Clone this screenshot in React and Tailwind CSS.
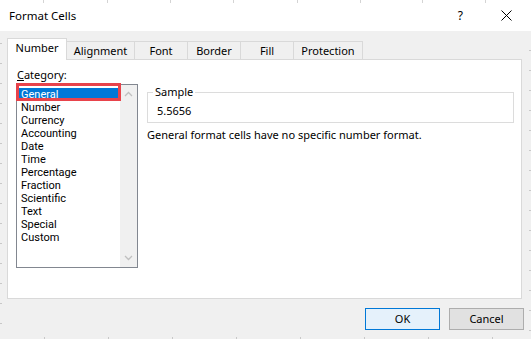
import React from "react";

const items = ["General","Number","Currency","Accounting","Date","Time","Percentage","Fraction","Scientific","Text","Special","Custom"];
const tabs = [
  { t: "Alignment", w: "w-[68px]" },
  { t: "Font", w: "w-[53px]" },
  { t: "Border", w: "w-[53px]" },
  { t: "Fill", w: "w-[53px]" },
  { t: "Protection", w: "w-[69px]" },
];
const topTicks = [43,107,170,233,297,360,422,485];
const leftTicks = [43,63,83,103,123,143,163,183,203,223,243,263,283,303,323];
const rightTicks = [50,70,90,110,130,150,170,190,210,230,250,270,290,310,330];
const bottomTicks = [44,108,172,236,300,364,428,492];

export default function App() {
  return (
    <div className="relative w-[531px] h-[339px] overflow-hidden bg-[#f0f0f0] text-[11px] text-black" style={{ fontFamily: '"Noto Sans", sans-serif' }}>
      <div className="h-[31px] bg-white flex items-center pl-[9px]">
        <span className="flex-1 leading-none text-[11.5px]">Format Cells</span>
        <span className="text-[12px] leading-none mr-[38px]">?</span>
        <svg width="11" height="11" viewBox="0 0 11 11" className="mr-[19px]">
          <path d="M0.5 0.5 L10.5 10.5 M10.5 0.5 L0.5 10.5" stroke="#000" strokeWidth="1" />
        </svg>
      </div>
      <div className="px-[7px] pt-[7px]">
        <div className="flex items-end h-[22px] relative z-10">
          <div className="w-[60px] h-[22px] bg-white border border-b-0 border-[#d9d9d9] flex items-center justify-center pb-[2px]">Number</div>
          {tabs.map((x) => (
            <div key={x.t} className={`${x.w} h-[19px] border border-l-0 border-b-0 border-[#d9d9d9] flex items-center justify-center`}>{x.t}</div>
          ))}
        </div>
        <div className="-mt-px h-[240px] w-[515px] bg-white border border-[#d9d9d9] flex pl-[8px] pt-[6px]">
          <div className="flex flex-col">
            <div className="h-[17px] leading-[17px] pl-[1px]"><span className="underline">C</span>ategory:</div>
            <div className="relative mt-[1px] w-[122px] h-[184px] border border-[#828790] flex">
              <div className="flex-1 pt-[3px]" style={{ fontFamily: 'Roboto, "Noto Sans", sans-serif' }}>
                {items.map((it, i) => (
                  <div key={it} className={`h-[13px] leading-[13px] pl-[4px] text-[11px] ${i === 0 ? "bg-[#0078d7] text-white" : ""}`}>{it}</div>
                ))}
              </div>
              <div className="w-[17px] bg-[#f0f0f0] flex flex-col justify-between items-center py-[6px]">
                <svg width="9" height="6" viewBox="0 0 9 6"><path d="M1 5 L4.5 1.5 L8 5" fill="none" stroke="#c0c0c0" strokeWidth="1.3" /></svg>
                <svg width="9" height="6" viewBox="0 0 9 6"><path d="M1 1 L4.5 4.5 L8 1" fill="none" stroke="#c0c0c0" strokeWidth="1.3" /></svg>
              </div>
              <div className="absolute left-[-1px] top-[-2px] w-[105px] h-[18px] border-[3px] border-[#e8434b]" />
            </div>
          </div>
          <div className="ml-[9px] pt-[26px] flex flex-col">
            <div className="relative w-[367px] h-[31px] border border-[#dcdcdc] flex items-center pl-[9px] pt-[8px]">
              <span className="absolute left-[5px] top-[-9px] bg-white px-[2px] leading-[16px]">Sample</span>
              <span>5.5656</span>
            </div>
            <div className="mt-[4px] leading-[16px]">General format cells have no specific number format.</div>
          </div>
        </div>
      </div>
      <div className="flex justify-end gap-[9px] pr-[7px] mt-[9px]">
        <div className="w-[75px] h-[22px] border border-[#0078d7] bg-[#e5f1fb] flex items-center justify-center">OK</div>
        <div className="w-[75px] h-[22px] border border-[#adadad] bg-[#e1e1e1] flex items-center justify-center">Cancel</div>
      </div>
      {topTicks.map((x) => <div key={"t"+x} className="absolute top-0 w-px h-[3px] bg-[#d4d4d4]" style={{ left: x }} />)}
      {leftTicks.map((y) => <div key={"l"+y} className="absolute left-0 w-[2px] h-px bg-[#c8c8c8]" style={{ top: y }} />)}
      {rightTicks.map((y) => <div key={"r"+y} className="absolute right-0 w-[2px] h-px bg-[#c8c8c8]" style={{ top: y }} />)}
      {bottomTicks.map((x) => <div key={"b"+x} className="absolute bottom-0 w-px h-[2px] bg-[#c8c8c8]" style={{ left: x }} />)}
    </div>
  );
}
